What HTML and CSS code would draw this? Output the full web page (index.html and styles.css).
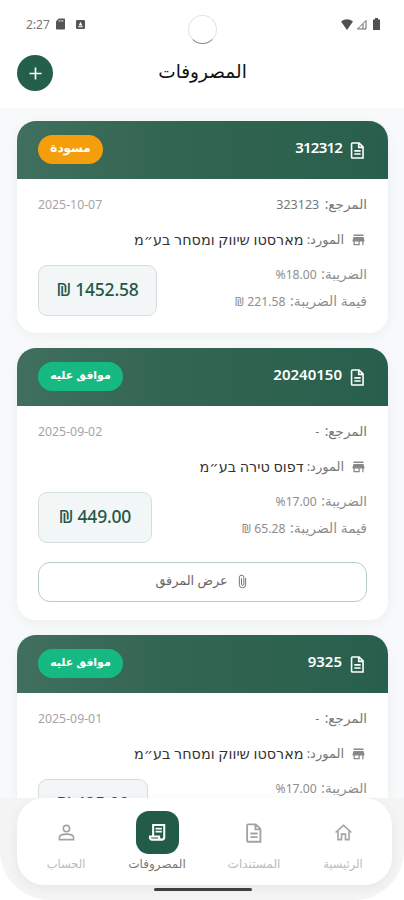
FILE: index.html
```html
<!DOCTYPE html>
<html lang="ar" dir="rtl">
<head>
    <meta charset="UTF-8">
    <meta name="viewport" content="width=device-width, initial-scale=1.0">
    <title>المصروفات</title>
    <link rel="stylesheet" href="styles.css">
</head>
<body>
    <!-- Shared icons -->
    <svg class="sprite">
        <symbol id="doc" viewBox="0 0 24 24">
            <path d="M5.500 2.500h8.500l5 5v14H5.500a1 1 0 0 1-1-1v-17a1 1 0 0 1 1-1z M13.500 3v5h5 M8 12.500h8 M8 16.500h8" fill="none" stroke="currentColor" stroke-width="2"/>
        </symbol>
        <symbol id="store" viewBox="0 0 24 24">
            <path d="M4 4h16v2.5H4z M4 8h16l1.5 5v2H20v6h-2v-6h-4v6H4v-6H2.5v-2z M6 15v4h6v-4z" fill="currentColor" fill-rule="evenodd"/>
        </symbol>
    </svg>
    <div class="screen">
        <div class="status" dir="ltr">
            <span class="time">2:27</span>
            <svg class="sd" viewBox="0 0 10 12"><path d="M3 0h6a1 1 0 0 1 1 1v10a1 1 0 0 1-1 1H1a1 1 0 0 1-1-1V3z" fill="#555"/><path d="M3.5 1.5v2 M5.5 1.5v2 M7.5 1.5v2" stroke="#ddd"/></svg>
            <svg class="app" viewBox="0 0 10 10"><rect width="10" height="10" rx="1.5" fill="#555"/><path d="M5 2l2 4H3z M2.5 7h5v1h-5z" fill="#fff"/></svg>
            <span class="camera"></span>
            <svg class="wifi" viewBox="0 0 12 11"><path d="M0 2.5Q6-2 12 2.5L6 11z" fill="#505050"/></svg>
            <svg class="signal" viewBox="0 0 11 11"><path d="M10 1.5V10H1.5z M7 5v5" fill="none" stroke="#666"/></svg>
            <svg class="battery" viewBox="0 0 7 12"><path d="M2 0h3v1.5h2V12H0V1.5h2z" fill="#505050"/></svg>
        </div>
        <header class="topbar">
            <h1>المصروفات</h1>
            <button class="add"><svg viewBox="0 0 14 14"><path d="M7 .5v13M.5 7h13" stroke="#fff" stroke-width="1.8"/></svg></button>
        </header>

        <main class="list">
            <section class="card">
                <div class="card-head">
                    <svg class="doc"><use href="#doc"/></svg>
                    <span class="number tight">312312</span>
                    <span class="badge draft">مسودة</span>
                </div>
                <div class="card-body">
                    <div class="ref"><span>المرجع: <bdi class="ref-num">323123</bdi></span><bdi class="date">2025-10-07</bdi></div>
                    <div class="supplier"><svg><use href="#store"/></svg><span class="label">المورد:</span><span class="name">מארסטו שיווק ומסחר בע״מ</span></div>
                    <div class="money">
                        <div class="tax">
                            <p>الضريبة: <span dir="ltr">%18.00</span></p>
                            <p>قيمة الضريبة: <span dir="ltr">₪ 221.58</span></p>
                        </div>
                        <div class="amount w1" dir="ltr">₪ 1452.58</div>
                    </div>
                </div>
            </section>

            <section class="card">
                <div class="card-head">
                    <svg class="doc"><use href="#doc"/></svg>
                    <span class="number">20240150</span>
                    <span class="badge approved">موافق عليه</span>
                </div>
                <div class="card-body">
                    <div class="ref"><span>المرجع: <bdi class="ref-num">-</bdi></span><bdi class="date">2025-09-02</bdi></div>
                    <div class="supplier"><svg><use href="#store"/></svg><span class="label">المورد:</span><span class="name">דפוס טירה בע״מ</span></div>
                    <div class="money">
                        <div class="tax">
                            <p>الضريبة: <span dir="ltr">%17.00</span></p>
                            <p>قيمة الضريبة: <span dir="ltr">₪ 65.28</span></p>
                        </div>
                        <div class="amount w2" dir="ltr">₪ 449.00</div>
                    </div>
                    <button class="attach">
                        <svg viewBox="0 0 10 16"><path d="M8.5 4v7.5a3.5 3.5 0 0 1-7 0V3.500a2.500 2.500 0 0 1 5 0V11a1.300 1.300 0 0 1-2.600 0V4.500" fill="none" stroke="currentColor"/></svg>
                        <span>عرض المرفق</span>
                    </button>
                </div>
            </section>

            <section class="card">
                <div class="card-head">
                    <svg class="doc"><use href="#doc"/></svg>
                    <span class="number">9325</span>
                    <span class="badge approved">موافق عليه</span>
                </div>
                <div class="card-body">
                    <div class="ref"><span>المرجع: <bdi class="ref-num">-</bdi></span><bdi class="date">2025-09-01</bdi></div>
                    <div class="supplier"><svg><use href="#store"/></svg><span class="label">المورد:</span><span class="name">מארסטו שיווק ומסחר בע״מ</span></div>
                    <div class="money">
                        <div class="tax">
                            <p>الضريبة: <span dir="ltr">%17.00</span></p>
                        </div>
                        <div class="amount w3" dir="ltr">₪ 425.00</div>
                    </div>
                </div>
            </section>
        </main>

        <div class="bottom">
            <nav>
                <a class="tab home"><span class="tab-icon"><svg viewBox="0 0 24 24"><path d="M2 12l10-9 10 9 M5 10v11h4.500v-7h5v7H19V10" fill="none" stroke="currentColor" stroke-width="2"/></svg></span>الرئيسية</a>
                <a class="tab docs"><span class="tab-icon"><svg class="tall"><use href="#doc"/></svg></span>المستندات</a>
                <a class="tab active"><span class="tab-icon"><svg viewBox="0 0 24 24"><path d="M6.500 16V2.500h14V18a3 3 0 0 1-3 3H5a2.500 2.500 0 0 1-2.500-2.500V17H14v1.500a3 3 0 0 0 3 2.500" fill="none" stroke="currentColor" stroke-width="2.600"/><path d="M9.500 7h8M9.500 11h8" stroke="currentColor" stroke-width="2.200"/></svg></span>المصروفات</a>
                <a class="tab account"><span class="tab-icon"><svg viewBox="0 0 24 24"><circle cx="12" cy="7" r="4"/><path d="M3 21v-2.500C3 15.500 6 14 12 14s9 1.500 9 4.500V21z"/></svg></span>الحساب</a>
            </nav>
            <span class="handle"></span>
        </div>
    </div>
</body>
</html>
```

FILE: styles.css
```css
* {
    box-sizing: border-box;
}
body {
    margin: 0;
    background: #fff;
    font-family: "Noto Sans", "DejaVu Sans", sans-serif;
    color: #777;
}
p, h1 {
    margin: 0;
}
button {
    font-family: inherit;
    padding: 0;
}
svg {
    display: block;
    flex: none;
}
.sprite {
    display: none;
}
.screen {
    width: 404px;
    height: 900px;
    overflow: hidden;
    display: flex;
    flex-direction: column;
    background: #f7f9fa;
    border-radius: 0 0 50px 50px;
}
.status {
    height: 48px;
    flex: none;
    background: #fff;
    display: flex;
    align-items: center;
    padding: 0 24px 0 26px;
}
.time {
    font-size: 12px;
    width: 30px;
}
.sd {
    width: 9px;
    height: 12px;
}
.app {
    width: 9px;
    height: 9px;
    margin-left: 11px;
}
.camera {
    width: 29px;
    height: 29px;
    border: 1px solid #e4e4e4;
    border-bottom-color: #888;
    border-radius: 50%;
    margin: 11px auto 0 103px;
}
.wifi {
    width: 12px;
    height: 11px;
}
.signal {
    width: 11px;
    height: 11px;
    margin: 0 6px 0 3px;
}
.battery {
    width: 7px;
    height: 12px;
}
.topbar {
    height: 60px;
    flex: none;
    background: #fff;
    display: grid;
    grid-template-columns: 36px 1fr 36px;
    padding: 7px 16px 0 17px;
}
h1 {
    grid-column: 2;
    text-align: center;
    font-size: 18.5px;
    line-height: 31px;
    font-weight: 500;
    color: #111;
}
.add {
    width: 36px;
    height: 36px;
    border: 0;
    border-radius: 50%;
    background: #245f4c;
    display: flex;
    align-items: center;
    justify-content: center;
}
.add svg {
    width: 13px;
    height: 13px;
}
.list {
    height: 690px;
    flex: none;
    overflow: hidden;
    padding: 13px 16px 0 17px;
}
.card {
    background: #fff;
    border-radius: 19px;
    overflow: hidden;
    margin-bottom: 15.5px;
    box-shadow: 0 3px 12px rgba(40, 70, 70, .05);
}
.card-head {
    height: 57.5px;
    display: flex;
    align-items: center;
    padding: 0 21px;
    color: #fff;
    background: linear-gradient(to left, #285f4c, #336652 60%, #406f5e);
}
.doc {
    width: 19px;
    height: 19px;
    margin-bottom: -2px;
}
.number {
    font-size: 15px;
    font-weight: 600;
    margin: 0 6px 5px auto;
}
.tight {
    letter-spacing: -.8px;
}
.badge {
    height: 29px;
    border-radius: 15px;
    font-size: 12px;
    line-height: 25px;
    font-weight: bold;
    text-align: center;
}
.draft {
    width: 65px;
    background: #f59e0b;
}
.approved {
    width: 85px;
    font-size: 11px;
    background: #16b981;
}
.card-body {
    padding: 14.5px 21px 17px;
}
.ref {
    height: 22px;
    display: flex;
    justify-content: space-between;
    align-items: center;
    font-size: 13.5px;
}
.ref-num {
    font-size: 12.5px;
    margin-right: 2px;
}
.date {
    font-size: 12.3px;
    color: #a5a5a5;
}
.supplier {
    height: 22px;
    margin-top: 13px;
    display: flex;
    align-items: center;
    font-size: 13px;
    white-space: nowrap;
}
.supplier svg {
    width: 15px;
    height: 15px;
    margin: 0 1px 0 7px;
    color: #888;
}
.name {
    font-size: 14.4px;
    color: #333;
    margin-right: 3px;
}
.money {
    display: flex;
    justify-content: space-between;
    margin-top: 15px;
    height: 50.5px;
}
.tax {
    font-size: 13.5px;
    line-height: 26px;
    margin-top: -4.5px;
    color: #8e8e8e;
    white-space: nowrap;
}
.tax span {
    font-size: 12.2px;
    margin-right: 1px;
}
.tax p + p {
    font-size: 13.9px;
}
.amount {
    border: 1px solid #d4dfdc;
    border-radius: 9px;
    background: #f3f6f6;
    color: #245848;
    font-size: 17.5px;
    letter-spacing: -.2px;
    line-height: 46px;
    font-weight: 500;
    text-align: center;
    white-space: nowrap;
}
.w1 {
    width: 119px;
}
.w2 {
    width: 114px;
}
.w3 {
    width: 110px;
}
.attach {
    width: 100%;
    height: 40px;
    margin: 19px 0 1px;
    border: 1px solid #b9cbc5;
    border-radius: 12px;
    background: #fff;
    color: #666;
    display: flex;
    align-items: center;
    justify-content: center;
    gap: 10px;
    font-size: 12.8px;
    padding-right: 3px;
}
.attach span {
    margin-bottom: 4px;
}
.attach svg {
    width: 9px;
    height: 15px;
}
.bottom {
    flex: 1;
    background: #f4f4f4;
    padding: 0 12px 0 17px;
}
nav {
    height: 87px;
    background: #fff;
    border-radius: 27px;
    display: flex;
    padding: 0 2px;
    box-shadow: 0 3px 12px rgba(0, 0, 0, .06);
}
.tab {
    display: flex;
    flex-direction: column;
    align-items: center;
    padding-top: 13px;
    font-size: 11.5px;
    line-height: 20px;
    color: #bbb;
    white-space: nowrap;
}
.home {
    width: 94px;
}
.docs {
    width: 84px;
    font-size: 12px;
}
.account {
    width: 72px;
}
.tab-icon {
    width: 43px;
    height: 43px;
    border-radius: 13px;
    display: flex;
    align-items: center;
    justify-content: center;
    color: #a3a3a3;
    stroke: #a3a3a3;
    stroke-width: 2;
    fill: none;
}
.tab-icon svg {
    width: 19px;
    height: 19px;
}
.tab-icon .tall {
    height: 22px;
    width: 22px;
}
.active {
    width: 110px;
    font-size: 12px;
    color: #777;
}
.active .tab-icon {
    background: #225b47;
    color: #fff;
    stroke: none;
}
.handle {
    display: block;
    width: 98px;
    height: 3px;
    border-radius: 2px;
    background: #404040;
    margin: 3px 140px 0 0;
}
```
